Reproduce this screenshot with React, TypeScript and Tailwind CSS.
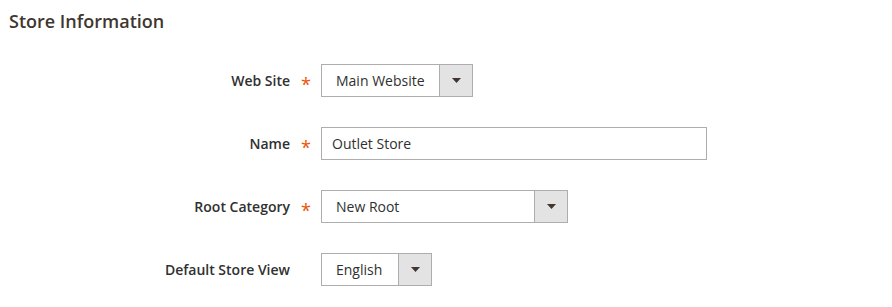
const font = { fontFamily: '"Open Sans", "Liberation Sans", sans-serif' };

type Row = {
  label: string;
  required: boolean;
  value: string;
  kind: "select" | "input";
  width: string;
};

const rows: Row[] = [
  { label: "Web Site", required: true, value: "Main Website", kind: "select", width: "w-[152px]" },
  { label: "Name", required: true, value: "Outlet Store", kind: "input", width: "w-[386px]" },
  { label: "Root Category", required: true, value: "New Root", kind: "select", width: "w-[247px]" },
  { label: "Default Store View", required: false, value: "English", kind: "select", width: "w-[111px]" },
];

const Arrow = () => (
  <svg width="9" height="5" viewBox="0 0 9 5">
    <path d="M0 0 H9 L4.5 5 Z" fill="#41362f" />
  </svg>
);

const Field = ({ row }: { row: Row }) => (
  <div className="flex items-center h-[33px]">
    <div className="w-[290px] text-right text-[14px] font-semibold text-[#303030]">{row.label}</div>
    <div className="w-[31px] flex justify-center pl-[1px]">
      {row.required && (
        <span className="text-[18px] leading-none text-[#eb5202] translate-y-[3px]">*</span>
      )}
    </div>
    {row.kind === "input" ? (
      <div className={`${row.width} h-[33px] border border-[#adadad] bg-white flex items-center pl-[10px] text-[14px] text-[#303030]`}>
        {row.value}
      </div>
    ) : (
      <div className={`${row.width} h-[33px] border border-[#adadad] bg-white flex items-center text-[14px] text-[#303030]`}>
        <span className="flex-1 pl-[14px]">{row.value}</span>
        <span className="w-[33px] h-full bg-[#e3e3e3] border-l border-[#adadad] flex items-center justify-center">
          <Arrow />
        </span>
      </div>
    )}
  </div>
);

export default function App() {
  return (
    <div className="w-[892px] h-[307px] bg-white overflow-hidden pt-[8px]" style={font}>
      <h2 className="pl-[9px] text-[18px] leading-[26px] font-semibold text-[#41362f]">Store Information</h2>
      <div className="mt-[30px] flex flex-col gap-[30px]">
        {rows.map(row => (
          <Field key={row.label} row={row} />
        ))}
      </div>
    </div>
  );
}
